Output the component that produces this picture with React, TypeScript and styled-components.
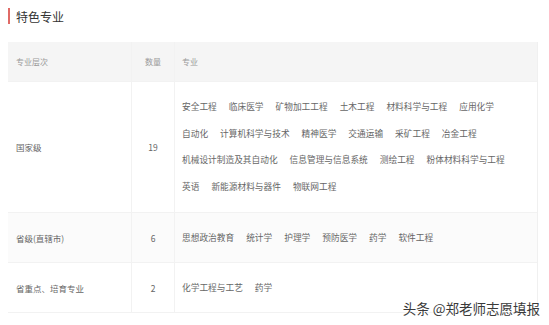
import React from 'react';
import styled, { createGlobalStyle } from 'styled-components';

const GlobalStyle = createGlobalStyle`
  body {
    margin: 0;
    background: #fff;
    font-family: "Noto Sans CJK SC", "Noto Sans", sans-serif;
  }
`;

const Page = styled.div`
  position: relative;
  width: 549px;
  height: 325px;
  padding: 8px 11px 0 8px;
  box-sizing: border-box;
  overflow: hidden;
`;

const Title = styled.div`
  display: flex;
  align-items: center;
  height: 16px;
  border-left: 2px solid #e06a66;
  padding-left: 6px;
  font-size: 12px;
  color: #333;
`;

const Table = styled.div`
  margin-top: 18px;
  display: grid;
  grid-template-columns: 124px 43px 1fr;
  border-right: 1px solid #f0f0f0;
`;

const Cell = styled.div<{ $head?: boolean; $alt?: boolean; $center?: boolean }>`
  display: flex;
  align-items: center;
  justify-content: ${(p) => (p.$center ? 'center' : 'flex-start')};
  padding: 0 8px;
  min-height: ${(p) => (p.$head ? '40px' : '50px')};
  box-sizing: border-box;
  background: ${(p) => (p.$head ? '#f5f5f5' : p.$alt ? '#fbfbfb' : '#fff')};
  color: ${(p) => (p.$head ? '#9a9a9a' : '#666')};
  font-size: ${(p) => (p.$head ? '8px' : '8.5px')};
  border-bottom: 1px solid #f2f2f2;
  border-right: 1px solid #f2f2f2;
  &:nth-child(3n) {
    border-right: none;
    padding-left: 7px;
  }
`;

const Majors = styled.div`
  display: flex;
  flex-direction: column;
  padding: 12px 0 12px;
`;

const Major = styled.span<{ $multi?: boolean }>`
  display: inline-block;
  margin-right: 12px;
  font-size: 8.7px;
  line-height: ${(p) => (p.$multi ? '26.5px' : 'normal')};
  white-space: nowrap;
`;

const Line = styled.div`
  display: flex;
`;

const Watermark = styled.div`
  position: absolute;
  right: 9px;
  bottom: 7px;
  font-size: 13.5px;
  color: #3a3a3a;
  text-shadow: 0 0 3px #fff, 0 0 2px #fff;
`;

const rows = [
  {
    level: '国家级',
    count: '19',
    lines: [
      ['安全工程', '临床医学', '矿物加工工程', '土木工程', '材料科学与工程', '应用化学'],
      ['自动化', '计算机科学与技术', '精神医学', '交通运输', '采矿工程', '冶金工程'],
      ['机械设计制造及其自动化', '信息管理与信息系统', '测绘工程', '粉体材料科学与工程'],
      ['英语', '新能源材料与器件', '物联网工程'],
    ],
  },
  {
    level: '省级(直辖市)',
    count: '6',
    lines: [['思想政治教育', '统计学', '护理学', '预防医学', '药学', '软件工程']],
  },
  {
    level: '省重点、培育专业',
    count: '2',
    lines: [['化学工程与工艺', '药学']],
  },
];

const App: React.FC = () => {
  return (
    <Page>
      <GlobalStyle />
      <Title>特色专业</Title>
      <Table>
        <Cell $head>专业层次</Cell>
        <Cell $head $center>数量</Cell>
        <Cell $head>专业</Cell>
        {rows.map((row, i) => {
          const multi = row.lines.length > 1;
          return (
            <React.Fragment key={row.level}>
              <Cell $alt={i === 1}>{row.level}</Cell>
              <Cell $alt={i === 1} $center>{row.count}</Cell>
              <Cell $alt={i === 1}>
                {multi ? (
                  <Majors>
                    {row.lines.map((line, j) => (
                      <Line key={j}>
                        {line.map((m) => (
                          <Major key={m} $multi>{m}</Major>
                        ))}
                      </Line>
                    ))}
                  </Majors>
                ) : (
                  <Line>
                    {row.lines[0].map((m) => (
                      <Major key={m}>{m}</Major>
                    ))}
                  </Line>
                )}
              </Cell>
            </React.Fragment>
          );
        })}
      </Table>
      <Watermark>头条 @郑老师志愿填报</Watermark>
    </Page>
  );
};

export default App;
